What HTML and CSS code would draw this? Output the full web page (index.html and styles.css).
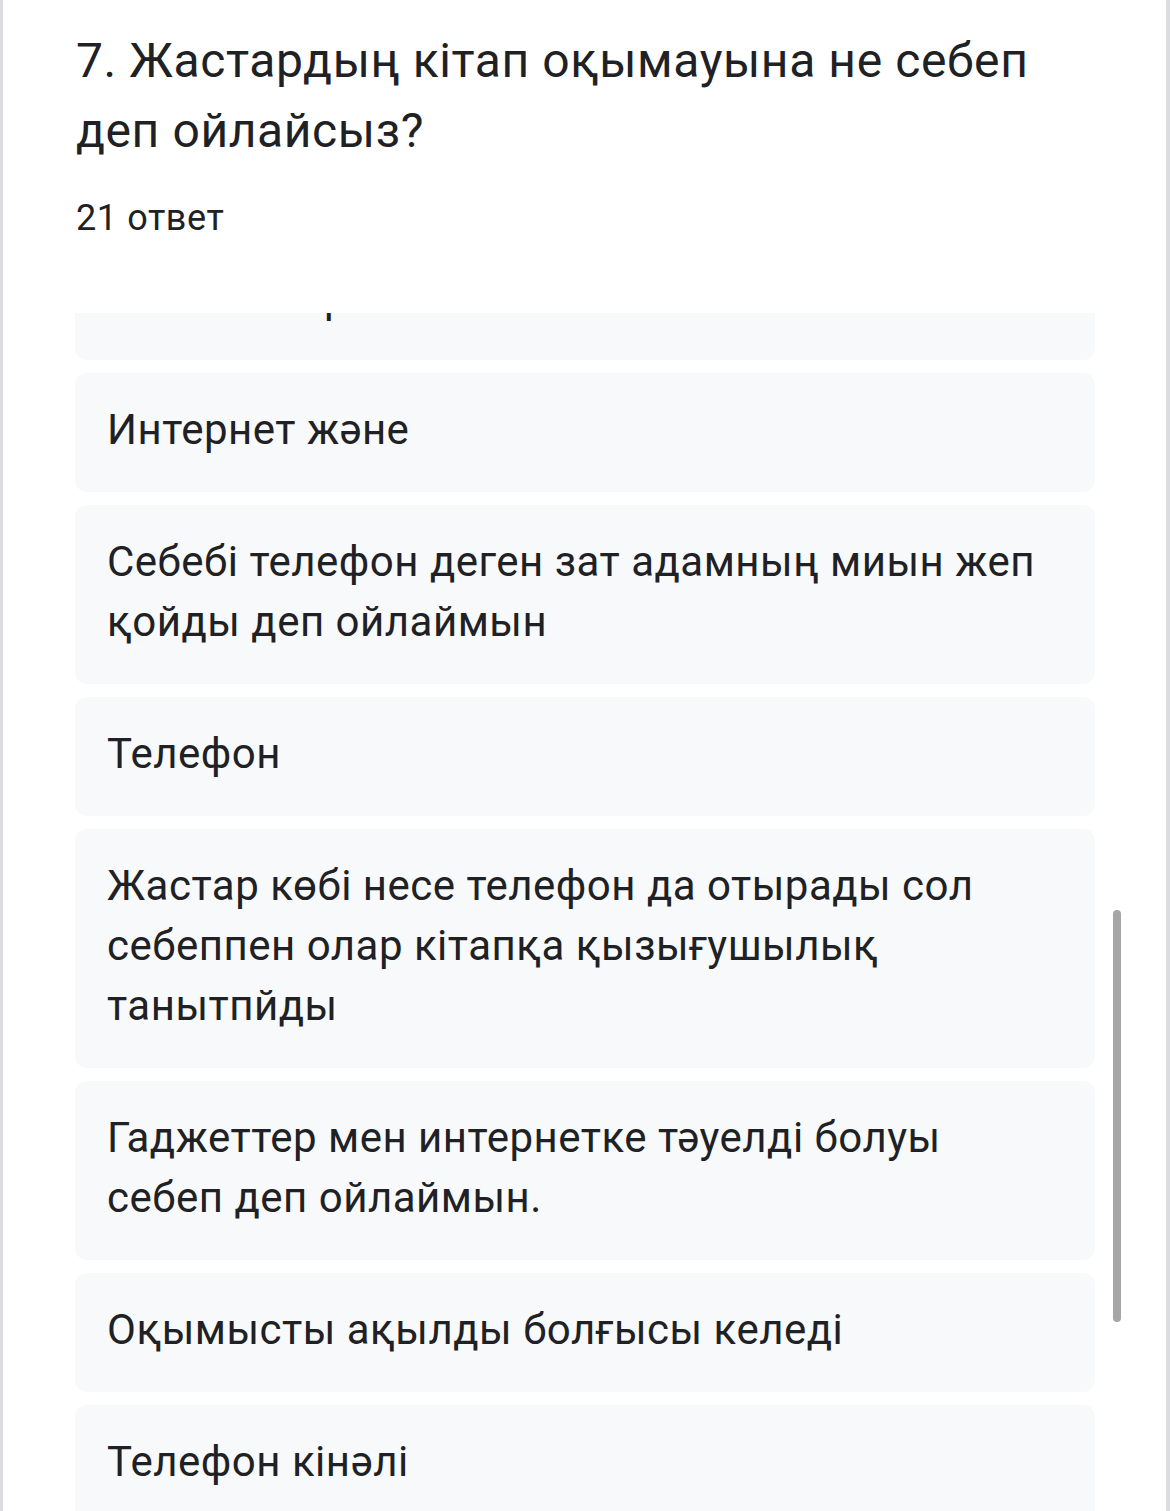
FILE: index.html
```html
<!DOCTYPE html>
<html lang="kk">
<head>
<meta charset="utf-8">
<title>Жауаптар</title>
<link rel="stylesheet" href="styles.css">
</head>
<body>
<div class="frame">
  <div class="question">
    <h1 class="title">7. Жастардың кітап оқымауына не себеп деп ойлайсыз?</h1>
    <div class="count">21 ответ</div>
  </div>
  <div class="list">
    <div class="list-inner">
      <div class="card">Себебі кітап оқуға уақыт бөлмейді, олардың<br>көбісі интернет</div>
      <div class="card">Интернет және</div>
      <div class="card">Себебі телефон деген зат адамның миын жеп қойды деп ойлаймын</div>
      <div class="card">Телефон</div>
      <div class="card">Жастар көбі несе телефон да отырады сол себеппен олар кітапқа қызығушылық танытпйды</div>
      <div class="card">Гаджеттер мен интернетке тәуелді болуы себеп деп ойлаймын.</div>
      <div class="card">Оқымысты ақылды болғысы келеді</div>
      <div class="card">Телефон кінәлі</div>
    </div>
    <div class="scrollbar"></div>
  </div>
</div>
</body>
</html>
```

FILE: styles.css
```css
html, body {
  margin: 0;
  padding: 0;
  background: #ffffff;
}
body {
  font-family: Roboto, "Noto Sans", "Liberation Sans", sans-serif;
  color: #202124;
}
.frame {
  box-sizing: border-box;
  width: 1170px;
  height: 1511px;
  border-left: 3px solid #dadce0;
  border-right: 4px solid #dadce0;
  display: flex;
  flex-direction: column;
  overflow: hidden;
}
.question {
  padding: 26px 100px 0 73px;
}
.title {
  margin: 0;
  font-weight: 400;
  font-size: 48px;
  line-height: 70px;
  letter-spacing: 0.6px;
}
.count {
  margin-top: 30px;
  font-size: 36px;
  line-height: 44px;
  letter-spacing: 0.6px;
}
.list {
  position: relative;
  margin-top: 73px;
  flex: 1;
  overflow: hidden;
  padding-left: 72px;
}
.list-inner {
  width: 1020px;
  display: flex;
  flex-direction: column;
  gap: 13px;
  margin-top: -132px;
}
.card {
  background: #f8f9fa;
  border-radius: 12px;
  padding: 27px 45px 32px 32px;
  font-size: 42px;
  line-height: 60px;
  letter-spacing: 0.5px;
}
.scrollbar {
  position: absolute;
  left: 1110px;
  top: 597px;
  width: 8px;
  height: 412px;
  border-radius: 4px;
  background: #a6a6a6;
}
```
